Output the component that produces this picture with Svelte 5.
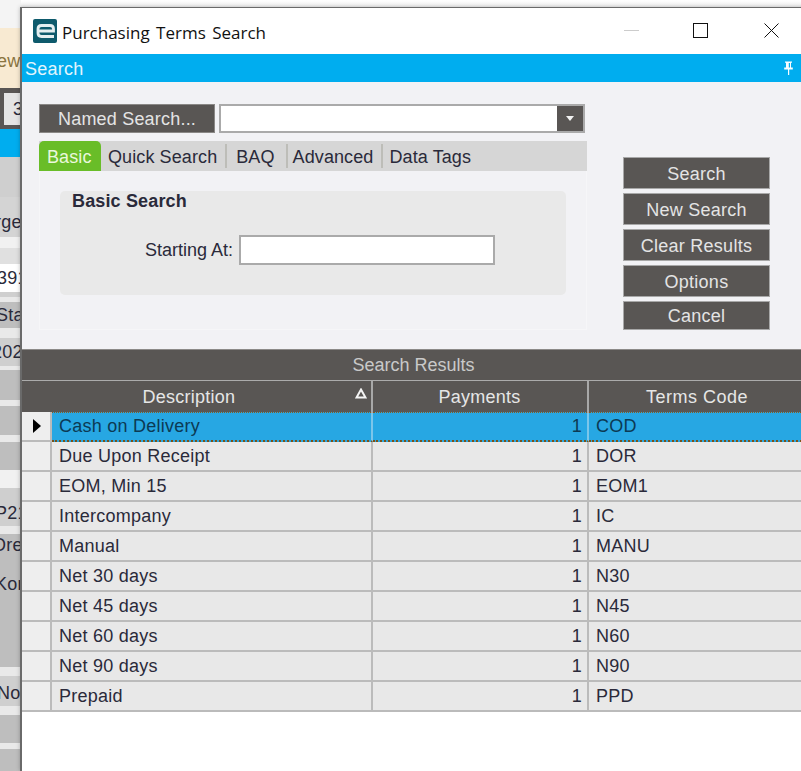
<script>
  const bands = [
    { h: 28, c: 'none' },
    { h: 60, c: 'cream', t: 'ew', x: -3, p: 6 },
    { h: 41, c: 'dark', input: '3' },
    { h: 28, c: 'blue' },
    { h: 40, c: 'g1' },
    { h: 40, c: 'g2', t: 'rge', x: -5, p: 10 },
    { h: 11, c: 'l3' },
    { h: 16, c: 'l1' },
    { h: 28, c: 'field', t: '391', x: -3 },
    { h: 5, c: 'g1' },
    { h: 5, c: 'l2' },
    { h: 26, c: 'g3', t: 'Sta', x: -4 },
    { h: 10, c: 'l2' },
    { h: 28, c: 'g1', t: '202', x: -8 },
    { h: 4, c: 'l2' },
    { h: 30, c: 'g3' },
    { h: 6, c: 'l2' },
    { h: 29, c: 'g3' },
    { h: 7, c: 'l2' },
    { h: 28, c: 'g3' },
    { h: 18, c: 'l3' },
    { h: 38, c: 'g1', t: 'P21', x: -5, p: 12 },
    { h: 8, c: 'l2' },
    { h: 22, c: 'g3', t: 'Ore', x: -8 },
    { h: 56, c: 'g3', t: 'Kor', x: -5 },
    { h: 55, c: 'g3' },
    { h: 9, c: 'l2' },
    { h: 30, c: 'g1', t: 'Nor', x: -3, p: 4 },
    { h: 9, c: 'l2' },
    { h: 28, c: 'g3' },
    { h: 6, c: 'l2' },
    { h: 22, c: 'g3' }
  ];
  const rows = [
    ['Cash on Delivery', 'COD'],
    ['Due Upon Receipt', 'DOR'],
    ['EOM, Min 15', 'EOM1'],
    ['Intercompany', 'IC'],
    ['Manual', 'MANU'],
    ['Net 30 days', 'N30'],
    ['Net 45 days', 'N45'],
    ['Net 60 days', 'N60'],
    ['Net 90 days', 'N90'],
    ['Prepaid', 'PPD']
  ];
  const tabs = ['Quick Search', 'BAQ', 'Advanced', 'Data Tags'];
  const actions = ['Search', 'New Search', 'Clear Results', 'Options', 'Cancel'];
</script>

<div class="desktop">
  <div class="behind">
    {#each bands as b}
      <div class="band {b.c}" style="height:{b.h}px;padding-top:{b.p || 0}px">
        {#if b.input}
          <span class="mini">{b.input}</span>
        {:else if b.t}
          <span class="clip" style="margin-left:{b.x}px">{b.t}</span>
        {/if}
      </div>
    {/each}
  </div>

  <div class="dialog">
    <header class="title">
      <svg class="logo" width="24" height="24" viewBox="0 0 24 24">
        <rect width="24" height="24" rx="2" fill="#0e5a6c" />
        <path d="M21 17.5H8.5C6 17.5 5 16.5 5 14V10C5 7.5 6 6.5 8.5 6.5H17C19.5 6.5 20.5 7.5 20.5 10V12H6" fill="none" stroke="#e4eef0" stroke-width="2.8" />
      </svg>
      <span class="title-text">Purchasing Terms Search</span>
      <div class="win">
        <svg width="15" height="15" viewBox="0 0 15 15" class="min"><path d="M0 7.5H15" stroke="#ccc" /></svg>
        <svg width="15" height="15" viewBox="0 0 15 15" class="max"><rect x="0.5" y="0.5" width="14" height="14" fill="none" stroke="#111" /></svg>
        <svg width="15" height="15" viewBox="0 0 15 15" class="close"><path d="M0.5 0.5L14.5 14.5M14.5 0.5L0.5 14.5" stroke="#111" fill="none" /></svg>
      </div>
    </header>

    <div class="bluebar">
      <span>Search</span>
      <svg class="pin" width="11" height="14" viewBox="0 0 11 14">
        <path d="M2 0.5H9V1.8H8V6.5H9.8V8.5H1.2V6.5H3V1.8H2Z M5 8.5H6.2V14H5Z M5.8 2V6.5H7V2Z" fill="#f8fdff" fill-rule="evenodd" />
      </svg>
    </div>

    <section class="panel">
      <div class="left">
        <div class="named">
          <button class="dark-btn named-btn">Named Search...</button>
          <div class="combo">
            <span class="combo-arrow"><i></i></span>
          </div>
        </div>
        <div class="tabbar">
          <span class="tab active">Basic</span>
          {#each tabs as t}
            <span class="tab">{t}</span>
          {/each}
        </div>
        <div class="tabbody">
          <div class="group">
            <div class="group-title">Basic Search</div>
            <div class="field-row">
              <label for="start">Starting At:</label>
              <input id="start" type="text" />
            </div>
          </div>
        </div>
      </div>
      <div class="actions">
        {#each actions as a, i}
          <button class="dark-btn action" class:last={i === 4}>{a}</button>
        {/each}
      </div>
    </section>

    <section class="results">
      <div class="results-title">Search Results</div>
      <div class="grid head">
        <div class="hc desc">
          Description
          <svg class="sort" width="12" height="11" viewBox="0 0 12 11"><path d="M6 1.5L10.5 9.5H1.5Z" fill="none" stroke="#f4f4f4" stroke-width="2" /></svg>
        </div>
        <div class="hc pay">Payments</div>
        <div class="hc nob">Terms Code</div>
      </div>
      {#each rows as r, i}
        <div class="grid row" class:sel={i === 0}>
          <div class="rh">
            {#if i === 0}
              <svg width="8" height="14" viewBox="0 0 8 14"><path d="M0 0L8 7L0 14Z" fill="#000" /></svg>
            {/if}
          </div>
          <div class="c">{r[0]}</div>
          <div class="c num">1</div>
          <div class="c nob">{r[1]}</div>
        </div>
      {/each}
    </section>
  </div>
</div>

<style>
  :global(body) {
    margin: 0;
    overflow: hidden;
    background: #fff;
  }
  .desktop {
    position: relative;
    width: 801px;
    height: 771px;
    overflow: hidden;
    background: linear-gradient(#fff, #f0f0f0 7px, #fff 28px);
    font-family: "Liberation Sans", Arial, sans-serif;
    font-size: 18px;
    letter-spacing: 0.25px;
    color: #2a2a3a;
  }
  .behind {
    display: flex;
    flex-direction: column;
    width: 21px;
  }
  .band {
    display: flex;
    align-items: center;
    justify-content: flex-start;
    overflow: hidden;
    flex: none;
    box-sizing: border-box;
  }
  .clip {
    white-space: nowrap;
    flex: none;
  }
  .none { background: #f4f4f4; }
  .cream { background: #f8ead2; color: #8a7440; }
  .dark { background: #595654; padding-left: 4px; }
  .mini {
    width: 100%;
    height: 32px;
    background: #e4e4e4;
    line-height: 32px;
    text-indent: 9px;
    overflow: hidden;
  }
  .blue { background: #00adef; }
  .g1 { background: #cfcfcf; }
  .g2 { background: #d4d4d4; }
  .g3 { background: #bebebe; }
  .l1 { background: #e0e0e0; }
  .l2 { background: #e9e9e9; }
  .l3 { background: #f1f1f1; }
  .field { background: #fff; }

  .dialog {
    position: absolute;
    left: 20px;
    top: 7px;
    width: 785px;
    height: 764px;
    box-sizing: border-box;
    border-top: 1px solid #6a6a6a;
    border-left: 2px solid #6a6a6a;
    background: #fff;
    display: flex;
    flex-direction: column;
    box-shadow: 0 0 4px rgba(0, 0, 0, 0.25);
  }
  .title {
    height: 46px;
    flex: none;
    display: flex;
    align-items: center;
    padding-left: 11px;
    position: relative;
  }
  .logo { flex: none; }
  .title-text {
    font-family: "Open Sans", "Noto Sans", sans-serif;
    font-size: 17px;
    letter-spacing: 0;
    color: #111;
    margin-left: 5px;
    word-spacing: 2px;
    position: relative;
    top: 1px;
  }
  .win {
    position: absolute;
    left: 602px;
    top: 15px;
    display: flex;
    align-items: flex-start;
  }
  .win svg { display: block; flex: none; }
  .min { margin-right: 54px; }
  .max { margin-right: 56px; }

  .bluebar {
    height: 28px;
    flex: none;
    background: #00adef;
    display: flex;
    align-items: center;
    padding-left: 3px;
    padding-top: 2px;
    box-sizing: border-box;
    color: #e2f5fd;
    position: relative;
  }
  .pin {
    position: absolute;
    left: 761px;
    top: 7px;
  }

  .panel {
    height: 267px;
    flex: none;
    box-sizing: border-box;
    background: #f2f2f5;
    display: flex;
    padding-left: 17px;
  }
  .left { width: 548px; flex: none; padding-top: 22px; }
  .named { display: flex; gap: 4px; height: 29px; }
  .dark-btn {
    background: #595654;
    color: #e4e4e4;
    font-family: "Liberation Sans", Arial, sans-serif;
    font-size: 18px;
    letter-spacing: 0.25px;
    padding: 2px 0 0;
    border: 1px solid #a8a8a8;
    box-sizing: border-box;
  }
  .named-btn { width: 176px; border-color: #8a8886; letter-spacing: 0.2px; }
  .combo {
    width: 366px;
    box-sizing: border-box;
    border: 2px solid #aaa;
    background: #fff;
    display: flex;
    justify-content: flex-end;
  }
  .combo-arrow {
    width: 26px;
    background: #595654;
    display: flex;
    align-items: center;
    justify-content: center;
  }
  .combo-arrow i {
    width: 0;
    height: 0;
    border-left: 4px solid transparent;
    border-right: 4px solid transparent;
    border-top: 5px solid #f2f2f2;
  }
  .tabbar {
    margin-top: 8px;
    height: 30px;
    background: #d6d6d6;
    display: flex;
    align-items: center;
    letter-spacing: 0.1px;
  }
  .tab {
    height: 24px;
    line-height: 26px;
    box-sizing: content-box;
    border-right: 2px solid #bdbdb8;
    white-space: nowrap;
  }
  .tab:nth-child(2) { padding: 0 8px 0 7px; }
  .tab:nth-child(3) { padding: 0 11px 0 9px; }
  .tab:nth-child(4) { padding: 0 8px 0 5px; }
  .tab:nth-child(5) { padding: 0 0 0 6px; border-right: 0; }
  .tab.active {
    border-right: 0;
    width: 62px;
    height: 30px;
    line-height: 32px;
    box-sizing: border-box;
    padding: 0 0 0 8px;
    background: #69bd28;
    color: #eaf8dc;
    border-radius: 5px 5px 0 0;
  }
  .tabbody {
    height: 159px;
    box-sizing: border-box;
    border: 1px solid #f6f6f8;
    border-top: 0;
    padding: 20px 20px 0 20px;
  }
  .group {
    height: 104px;
    width: 506px;
    background: #e9e9e9;
    border-radius: 5px;
  }
  .group-title {
    font-weight: 700;
    padding-left: 12px;
    line-height: 20px;
    letter-spacing: 0.15px;
  }
  .field-row {
    display: flex;
    align-items: center;
    justify-content: flex-end;
    margin-top: 24px;
    width: 435px;
    gap: 6px;
  }
  .field-row label { white-space: nowrap; letter-spacing: 0; }
  .field-row input {
    width: 256px;
    height: 30px;
    box-sizing: border-box;
    border: 2px solid #aaa;
    border-radius: 0;
    background: #fff;
    padding: 0;
    margin: 0;
    outline: 0;
  }
  .actions {
    margin-left: 36px;
    padding-top: 75px;
    display: flex;
    flex-direction: column;
    gap: 4px;
    width: 147px;
  }
  .action { height: 32px; width: 147px; }
  .action.last { height: 29px; }

  .results {
    flex: 1;
    background: #fff;
  }
  .results-title {
    height: 32px;
    box-sizing: border-box;
    background: #595654;
    border-top: 1px solid #8c8a88;
    border-bottom: 1px solid #ababab;
    color: #c9c9c9;
    text-align: center;
    line-height: 31px;
    letter-spacing: 0;
  }
  .grid {
    display: grid;
    grid-template-columns: 30px 321px 216px 216px;
  }
  .grid.head {
    grid-template-columns: 351px 216px 216px;
    height: 31px;
    background: #595654;
    color: #e6e6e6;
  }
  .hc {
    position: relative;
    text-align: center;
    line-height: 32px;
    border-right: 2px solid #a8a8a8;
    box-sizing: border-box;
  }
  .hc.desc { padding-right: 15px; }
  .hc.pay { padding-right: 1px; }
  .hc.nob { border-right: 0; letter-spacing: 0.5px; }
  .sort {
    position: absolute;
    left: 333px;
    top: 7px;
  }
  .row {
    height: 30px;
    box-sizing: border-box;
    background: #e8e8e8;
  }
  .rh, .c {
    box-sizing: border-box;
    border-right: 2px solid #bbb;
    border-bottom: 2px solid #bbb;
    line-height: 28px;
    height: 30px;
  }
  .rh {
    background: #eeeeee;
    display: flex;
    align-items: center;
    padding-left: 11px;
  }
  .c { padding-left: 7px; white-space: nowrap; }
  .num { text-align: right; padding-right: 5px; padding-left: 0; }
  .nob { border-right: 0; }
  .row.sel .c {
    background: #27a7e3;
    color: #0c3a54;
    border-top: 1px dotted #8a5a1c;
    border-bottom: 2px dotted #7a5218;
    border-right-color: #7cc6ea;
    line-height: 26px;
  }
</style>
